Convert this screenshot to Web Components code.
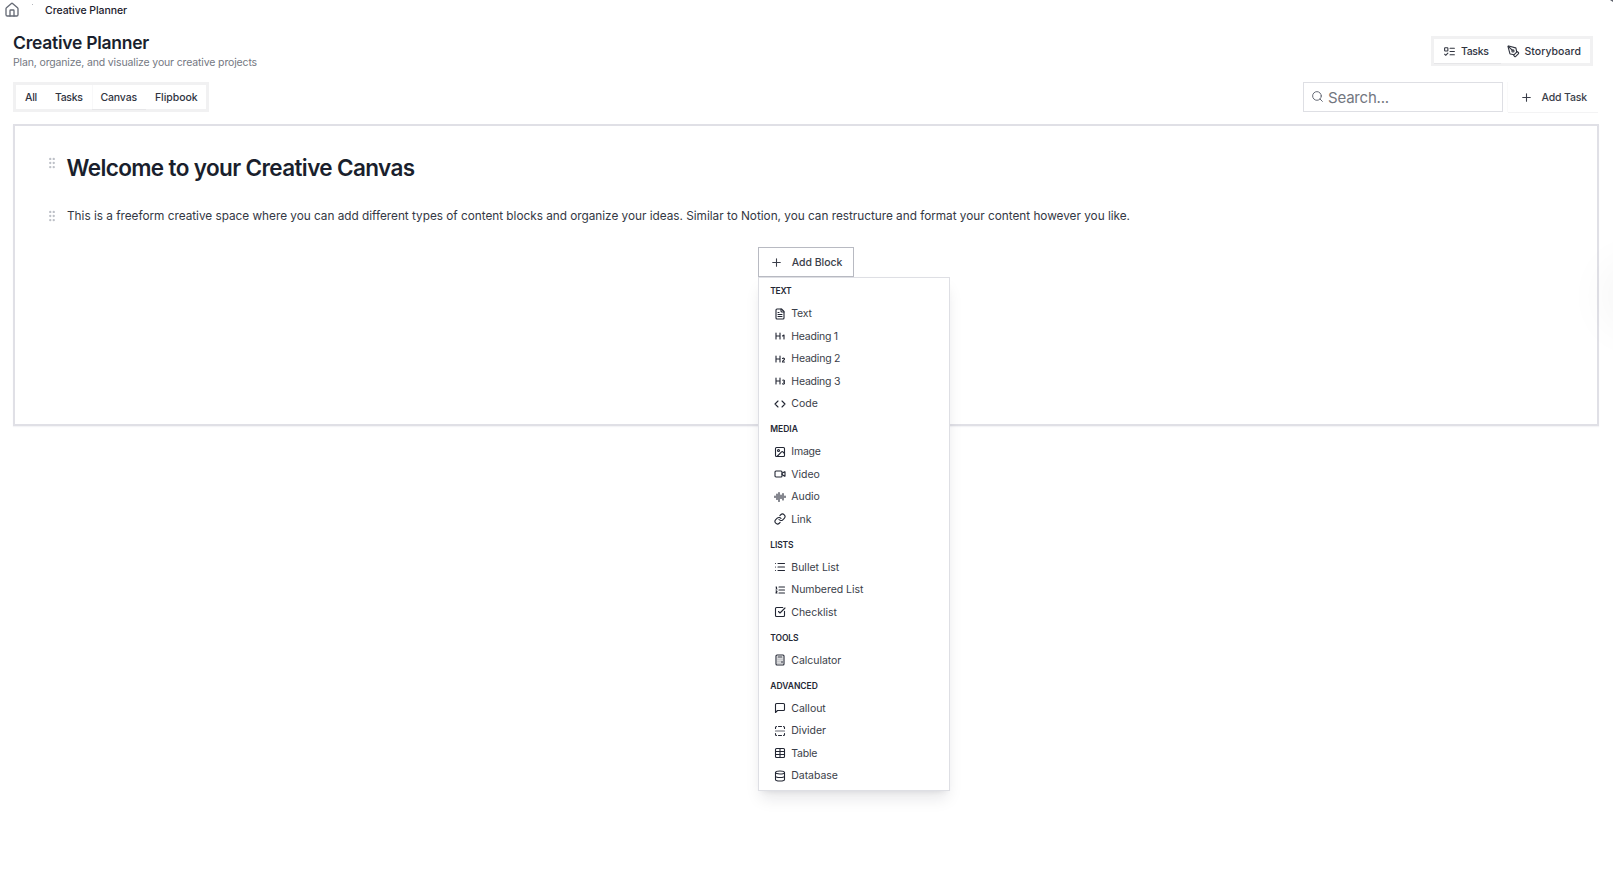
<!DOCTYPE html>
<html lang="en">
<head>
<meta charset="UTF-8">
<title>Creative Planner</title>
<style>
    html, body { margin: 0; height: 100%; overflow: hidden; background: #fff; }
    body { font-family: Inter, "Open Sans", sans-serif; color: #1c202d; }
</style>
</head>
<body>
<planner-app></planner-app>

<script>
// --- 1. DATA ---

const icons = {
    home: '<path d="M15 21v-8a1 1 0 0 0-1-1h-4a1 1 0 0 0-1 1v8"/><path d="M3 10a2 2 0 0 1 .709-1.528l7-5.999a2 2 0 0 1 2.582 0l7 5.999A2 2 0 0 1 21 10v9a2 2 0 0 1-2 2H5a2 2 0 0 1-2-2z"/>',
    tasks: '<rect x="3" y="5" width="6" height="6" rx="1"/><path d="m3 17 2 2 4-4M13 6h8M13 12h8M13 18h8"/>',
    pen: '<path d="M15.707 21.293a1 1 0 0 1-1.414 0l-1.586-1.586a1 1 0 0 1 0-1.414l5.586-5.586a1 1 0 0 1 1.414 0l1.586 1.586a1 1 0 0 1 0 1.414z"/><path d="m18 13-1.375-6.874a1 1 0 0 0-.746-.776L3.235 2.028a1 1 0 0 0-1.207 1.207L5.35 15.879a1 1 0 0 0 .776.746L13 18"/><path d="m2.3 2.3 7.286 7.286"/><circle cx="11" cy="11" r="2"/>',
    search: '<circle cx="11" cy="11" r="8"/><path d="m21 21-4.3-4.3"/>',
    plus: '<path d="M5 12h14M12 5v14"/>',
    text: '<path d="M15 2H6a2 2 0 0 0-2 2v16a2 2 0 0 0 2 2h12a2 2 0 0 0 2-2V7z"/><path d="M14 2v4a2 2 0 0 0 2 2h4M10 9H8M16 13H8M16 17H8"/>',
    h1: '<path d="M4 12h8M4 18V6M12 18V6m5 6 3-2v8"/>',
    h2: '<path d="M4 12h8M4 18V6M12 18V6M21 18h-4c0-4 4-3 4-6 0-1.5-2-2.5-4-1"/>',
    h3: '<path d="M4 12h8M4 18V6M12 18V6M17.5 10.5c1.7-1 3.5 0 3.5 1.5a2 2 0 0 1-2 2M17 17.5c2 1.5 4 .3 4-1.5a2 2 0 0 0-2-2"/>',
    code: '<path d="m16 18 6-6-6-6M8 6l-6 6 6 6"/>',
    image: '<rect x="3" y="3" width="18" height="18" rx="2"/><circle cx="9" cy="9" r="2"/><path d="m21 15-3.086-3.086a2 2 0 0 0-2.828 0L6 21"/>',
    video: '<path d="m16 13 5.223 3.482a.5.5 0 0 0 .777-.416V7.87a.5.5 0 0 0-.752-.432L16 10.5"/><rect x="2" y="6" width="14" height="12" rx="2"/>',
    audio: '<path d="M2 10v3M6 6v11M10 3v18M14 8v7M18 5v13M22 10v3"/>',
    link: '<path d="M10 13a5 5 0 0 0 7.54.54l3-3a5 5 0 0 0-7.07-7.07l-1.72 1.71"/><path d="M14 11a5 5 0 0 0-7.54-.54l-3 3a5 5 0 0 0 7.07 7.07l1.71-1.71"/>',
    bullets: '<path d="M3 5h.01M3 12h.01M3 19h.01M8 5h13M8 12h13M8 19h13"/>',
    numbers: '<path d="M10 12h11M10 18h11M10 6h11M4 10h2M4 6h1v4M6 18H4c0-1 2-2 2-3s-1-1.5-2-1"/>',
    check: '<path d="M21 10.5V19a2 2 0 0 1-2 2H5a2 2 0 0 1-2-2V5a2 2 0 0 1 2-2h12.5"/><path d="m9 11 3 3L22 4"/>',
    calculator: '<rect x="4" y="2" width="16" height="20" rx="2"/><path d="M8 6h8M16 14v4M16 10h.01M12 10h.01M8 10h.01M12 14h.01M8 14h.01M12 18h.01M8 18h.01"/>',
    callout: '<path d="M21 15a2 2 0 0 1-2 2H7l-4 4V5a2 2 0 0 1 2-2h14a2 2 0 0 1 2 2z"/>',
    divider: '<path d="M5 3a2 2 0 0 0-2 2v2M19 3a2 2 0 0 1 2 2v2M21 17v2a2 2 0 0 1-2 2M5 21a2 2 0 0 1-2-2v-2M9 3h6M9 21h6"/><path d="M3 12h18" stroke-opacity=".7"/>',
    table: '<path d="M12 3v18M3 9h18M3 15h18"/><rect x="3" y="3" width="18" height="18" rx="2"/>',
    database: '<ellipse cx="12" cy="5" rx="9" ry="3"/><path d="M3 5v14a9 3 0 0 0 18 0V5M3 12a9 3 0 0 0 18 0"/>',
    grip: '<circle cx="9" cy="12" r="1"/><circle cx="9" cy="5" r="1"/><circle cx="9" cy="19" r="1"/><circle cx="15" cy="12" r="1"/><circle cx="15" cy="5" r="1"/><circle cx="15" cy="19" r="1"/>'
};

// [icon, label, label width]
const blockGroups = [
    { name: 'TEXT', w: 21, items: [['text', 'Text', 20.5], ['h1', 'Heading 1', 46.5], ['h2', 'Heading 2', 49], ['h3', 'Heading 3', 49], ['code', 'Code', 26.5]] },
    { name: 'MEDIA', w: 27.5, items: [['image', 'Image', 29.5], ['video', 'Video', 28.5], ['audio', 'Audio', 28.5], ['link', 'Link', 20]] },
    { name: 'LISTS', w: 23, items: [['bullets', 'Bullet List', 48], ['numbers', 'Numbered List', 72], ['check', 'Checklist', 45.5]] },
    { name: 'TOOLS', w: 28, items: [['calculator', 'Calculator', 50]] },
    { name: 'ADVANCED', w: 47.5, items: [['callout', 'Callout', 34.5], ['divider', 'Divider', 34.5], ['table', 'Table', 26], ['database', 'Database', 46.5]] }
];

// --- 2. BASE COMPONENTS ---

class UiIcon extends HTMLElement {
    constructor() { super(); this.attachShadow({ mode: 'open' }); }
    connectedCallback() {
        const size = this.getAttribute('size') || 12;
        const stroke = this.getAttribute('stroke') || 2;
        this.shadowRoot.innerHTML = `
            <style>
                :host { display: block; flex: none; width: ${size}px; height: ${size}px; }
                svg { display: block; }
            </style>
            <svg width="${size}" height="${size}" viewBox="0 0 24 24" fill="none" stroke="currentColor"
                stroke-width="${stroke}" stroke-linecap="round" stroke-linejoin="round">${icons[this.getAttribute('name')]}</svg>`;
    }
}
customElements.define('ui-icon', UiIcon);

// One line of text, tracked out or in to fill its width
class UiLabel extends HTMLElement {
    constructor() { super(); this.attachShadow({ mode: 'open' }); }
    connectedCallback() {
        const width = parseFloat(this.getAttribute('width'));
        this.shadowRoot.innerHTML = `
            <style>
                :host { display: block; flex: none; width: ${width}px; white-space: nowrap; }
                span { display: inline-block; }
            </style>
            <span><slot></slot></span>`;
        const span = this.shadowRoot.querySelector('span');
        const natural = span.getBoundingClientRect().width;
        // flatten, so that text slotted through a parent component counts too
        const nodes = this.shadowRoot.querySelector('slot').assignedNodes({ flatten: true });
        const count = nodes.map(n => n.textContent).join('').length;
        if (count) {
            span.style.letterSpacing = `${(width - natural) / count}px`;
        }
    }
}
customElements.define('ui-label', UiLabel);

// --- 3. PAGE COMPONENTS ---

class AppBreadcrumb extends HTMLElement {
    constructor() { super(); this.attachShadow({ mode: 'open' }); }
    connectedCallback() {
        this.shadowRoot.innerHTML = `
            <style>
                :host { display: flex; align-items: center; height: 20px; padding-left: 4px; font-size: 10.5px; font-weight: 500; }
                ui-icon { color: #666b76; }
                i { width: 1px; height: 1px; margin: 0 12px 11px 12px; background: #b5b7bd; }
            </style>
            <ui-icon name="home" size="16"></ui-icon><i></i>
            <ui-label width="82"><slot></slot></ui-label>`;
    }
}
customElements.define('app-breadcrumb', AppBreadcrumb);

class SegmentedControl extends HTMLElement {
    constructor() { super(); this.attachShadow({ mode: 'open' }); }
    connectedCallback() {
        this.shadowRoot.innerHTML = `
            <style>
                :host { display: flex; box-sizing: border-box; height: 30px; border: 3px solid #f1f1f2; }
            </style>
            <slot></slot>`;
    }
}
customElements.define('segmented-control', SegmentedControl);

class SegmentItem extends HTMLElement {
    constructor() { super(); this.attachShadow({ mode: 'open' }); }
    connectedCallback() {
        const icon = this.getAttribute('icon');
        this.shadowRoot.innerHTML = `
            <style>
                :host {
                    display: flex; align-items: center; gap: 5px; padding: 0 9px;
                    font-size: 10.5px; font-weight: 500; color: #30343f;
                }
                :host([icon]) { padding: 0 12px; }
                :host([active]) { box-shadow: inset 1px 0 #f8f8f9, 0 1px #e6e6e8; }
                :host([active][icon]) { box-shadow: 0 1px #e6e6e8; }
            </style>
            ${icon ? `<ui-icon name="${icon}" size="13"></ui-icon>` : ''}
            <ui-label width="${this.getAttribute('width')}">${this.getAttribute('label')}</ui-label>`;
    }
}
customElements.define('segment-item', SegmentItem);

class SearchField extends HTMLElement {
    constructor() { super(); this.attachShadow({ mode: 'open' }); }
    connectedCallback() {
        this.shadowRoot.innerHTML = `
            <style>
                :host {
                    display: flex; align-items: center; gap: 4px; box-sizing: border-box;
                    width: 200px; height: 30px; padding-left: 7px; border: 1px solid #dedfe4;
                    font-size: 15px; color: #737780;
                }
                ui-icon { margin-bottom: 2px; color: #636873; }
                ui-label { padding-top: 1px; }
            </style>
            <ui-icon name="search" size="13" stroke="1.8"></ui-icon>
            <ui-label width="61"><slot></slot></ui-label>`;
    }
}
customElements.define('search-field', SearchField);

class ActionButton extends HTMLElement {
    constructor() { super(); this.attachShadow({ mode: 'open' }); }
    connectedCallback() {
        this.shadowRoot.innerHTML = `
            <style>
                :host {
                    display: flex; align-items: center; gap: 8.5px; box-sizing: border-box;
                    height: 30px; padding-left: 12px;
                    font-size: 10.5px; font-weight: 500; color: #3a3e49;
                }
                :host([outline]) { width: 96px; padding-left: 11.3px; border: 1px solid #b8bac2; }
                :host([soft]) { width: 90px; box-shadow: -1px 0 #fafafa, 0 1px #f3f3f4; }
            </style>
            <ui-icon name="plus" size="13"></ui-icon>
            <ui-label width="${this.getAttribute('width')}"><slot></slot></ui-label>`;
    }
}
customElements.define('action-button', ActionButton);

class CanvasBlock extends HTMLElement {
    constructor() { super(); this.attachShadow({ mode: 'open' }); }
    connectedCallback() {
        this.shadowRoot.innerHTML = `
            <style>
                :host { display: flex; align-items: center; gap: 8px; padding-left: 30px; font-size: 11.8px; color: #343844; }
                :host([heading]) { gap: 7.5px; font-size: 22.5px; font-weight: 600; color: #1a1f2d; }
                ui-icon { color: #bdc0c7; }
                ui-label { margin-bottom: 1px; }
                :host([heading]) ui-label { margin-bottom: 0; }
                :host([heading]) ui-icon { margin-bottom: 8px; }
            </style>
            <ui-icon name="grip" size="14"></ui-icon>
            <ui-label width="${this.getAttribute('width')}">${this.getAttribute('text')}</ui-label>`;
    }
}
customElements.define('canvas-block', CanvasBlock);

class BlockMenu extends HTMLElement {
    constructor() { super(); this.attachShadow({ mode: 'open' }); }
    connectedCallback() {
        const groups = blockGroups.map(g => `
            <div class="name"><ui-label width="${g.w}">${g.name}</ui-label></div>
            ${g.items.map(([icon, label, w]) => `
                <div class="item"><ui-icon name="${icon}" stroke="2.2"></ui-icon><ui-label width="${w}">${label}</ui-label></div>`).join('')}
        `).join('');
        this.shadowRoot.innerHTML = `
            <style>
                :host {
                    display: block; box-sizing: border-box; width: 192px; height: 514px;
                    background: #fff; border: 1px solid #dedfe4;
                    box-shadow: 0 10px 15px -3px rgba(20, 20, 40, .1), 0 4px 6px -4px rgba(20, 20, 40, .1);
                }
                .name { display: flex; align-items: center; box-sizing: border-box; height: 25.5px; padding: 3px 0 0 11.3px; font-size: 8.5px; font-weight: 600; color: #242835; }
                .name:first-of-type { margin-top: -1px; }
                .item { display: flex; align-items: center; gap: 5.3px; height: 22.5px; padding-left: 15px; font-size: 10.5px; color: #3a3e49; }
                .item ui-icon { color: #222633; }
            </style>${groups}`;
    }
}
customElements.define('block-menu', BlockMenu);

class PlannerApp extends HTMLElement {
    constructor() { super(); this.attachShadow({ mode: 'open' }); }
    connectedCallback() {
        this.shadowRoot.innerHTML = `
            <style>
                :host { display: block; position: relative; height: 100%; overflow: hidden; }
                header, .toolbar { display: flex; justify-content: space-between; }
                header { height: 62px; padding: 0 20px 0 13px; box-sizing: border-box; }
                header segmented-control { margin-top: 16px; width: 162px; box-sizing: border-box; }
                .title { padding-top: 11px; font-size: 17.5px; line-height: 24px; font-weight: 600; color: #1a1f2d; }
                .sub { font-size: 10.5px; line-height: 15px; color: #747882; }
                .toolbar { padding: 0 15px 0 13px; }
                .toolbar segmented-control { width: 196px; }
                .tools { display: flex; gap: 5px; }
                .canvas {
                    display: flex; flex-direction: column; box-sizing: border-box; height: 302px;
                    margin: 12px 14px 0 13px; border: 2px solid #e0e0e6; box-shadow: 0 1px 1px #f4f4f6;
                }
                canvas-block { height: 30px; }
                canvas-block[heading] { height: 40px; margin: 21px 0 14px; }
                .add { position: relative; align-self: center; margin-top: 16px; }
                block-menu { position: absolute; top: 30px; left: 0; z-index: 2; }
                .glow {
                    position: absolute; left: 1613px; top: 271px; width: 50px; height: 50px; border-radius: 50%;
                    box-shadow: 0 0 44px 12px rgba(0, 0, 0, .04);
                }
                .corner { position: absolute; right: 0; top: 0; width: 3px; height: 2px; background: #5d616b; clip-path: polygon(0 0, 100% 0, 100% 100%); }
            </style>
            <app-breadcrumb>Creative Planner</app-breadcrumb>
            <header>
                <div>
                    <ui-label class="title" width="136">Creative Planner</ui-label>
                    <ui-label class="sub" width="244">Plan, organize, and visualize your creative projects</ui-label>
                </div>
                <segmented-control>
                    <segment-item style="padding-left: 9px" icon="tasks" width="27.5" label="Tasks" active></segment-item>
                    <segment-item style="padding-left: 6px" icon="pen" width="56.5" label="Storyboard"></segment-item>
                </segmented-control>
            </header>
            <div class="toolbar">
                <segmented-control>
                    <segment-item width="12" label="All"></segment-item>
                    <segment-item width="27.5" label="Tasks"></segment-item>
                    <segment-item width="36.5" label="Canvas" active></segment-item>
                    <segment-item width="42.5" label="Flipbook"></segment-item>
                </segmented-control>
                <div class="tools">
                    <search-field>Search...</search-field>
                    <action-button soft width="45.5">Add Task</action-button>
                </div>
            </div>
            <div class="canvas">
                <canvas-block heading width="348" text="Welcome to your Creative Canvas"></canvas-block>
                <canvas-block width="1063" text="This is a freeform creative space where you can add different types of content blocks and organize your ideas. Similar to Notion, you can restructure and format your content however you like."></canvas-block>
                <div class="add">
                    <action-button outline width="50.5">Add Block</action-button>
                    <block-menu></block-menu>
                </div>
            </div>
            <div class="glow"></div>
            <div class="corner"></div>`;
    }
}
customElements.define('planner-app', PlannerApp);
</script>
</body>
</html>
